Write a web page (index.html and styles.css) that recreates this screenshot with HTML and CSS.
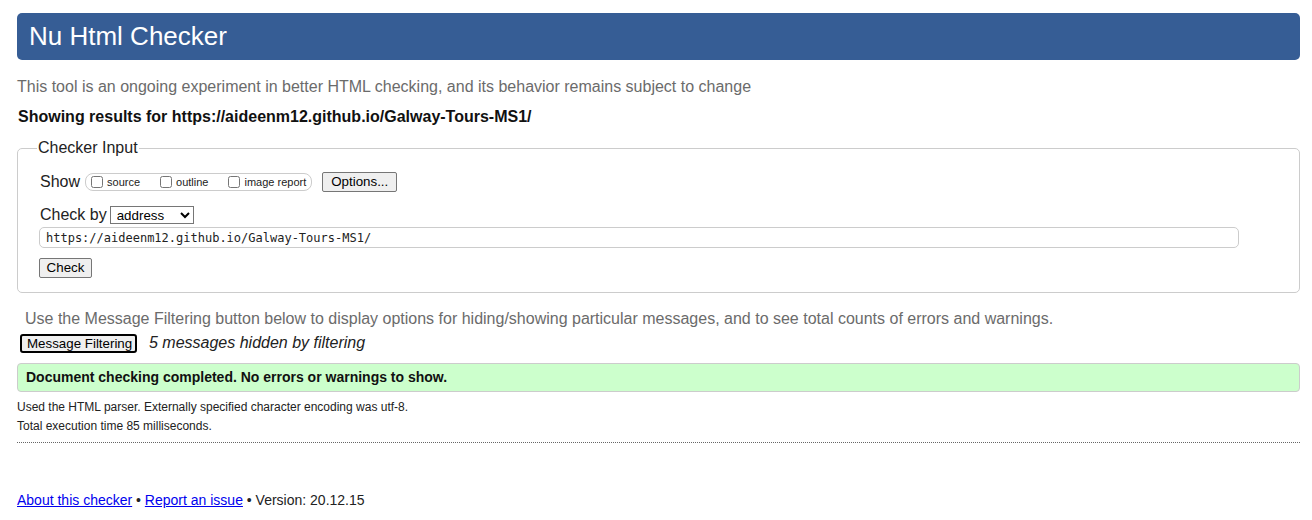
FILE: index.html
```html
<!DOCTYPE html>
<html lang="en">
<head>
<meta charset="utf-8">
<title>Nu Html Checker</title>
<link rel="stylesheet" href="styles.css">
</head>
<body>
<h1 class="title">Nu Html Checker</h1>
<p class="intro">This tool is an ongoing experiment in better HTML checking, and its behavior remains subject to change</p>
<p class="showing">Showing results for https://aideenm12.github.io/Galway-Tours-MS1/</p>
<fieldset class="checker">
  <legend class="legend">Checker Input</legend>
  <div class="row show-row">
    <span class="label">Show</span>
    <span class="showbox">
      <label class="opt"><input type="checkbox" class="cb">source</label>
      <label class="opt"><input type="checkbox" class="cb">outline</label>
      <label class="opt"><input type="checkbox" class="cb">image report</label>
    </span>
    <button class="btn options">Options...</button>
  </div>
  <div class="row by-row">
    <span class="label">Check by</span>
    <select class="sel"><option>address</option></select>
  </div>
  <input class="url" type="text" value="https://aideenm12.github.io/Galway-Tours-MS1/">
  <div class="row submit-row">
    <button class="btn check">Check</button>
  </div>
</fieldset>
<p class="filter-note">Use the Message Filtering button below to display options for hiding/showing particular messages, and to see total counts of errors and warnings.</p>
<div class="filter-row">
  <button class="btn filter">Message Filtering</button>
  <em class="hidden-count">5 messages hidden by filtering</em>
</div>
<div class="success">Document checking completed. No errors or warnings to show.</div>
<div class="details">
  <p class="detail">Used the HTML parser. Externally specified character encoding was utf-8.</p>
  <p class="detail">Total execution time 85 milliseconds.</p>
</div>
<hr class="sep">
<p class="footer"><a href="#">About this checker</a> • <a href="#">Report an issue</a> • Version: 20.12.15</p>
</body>
</html>
```

FILE: styles.css
```css
html, body {
  background: #fff;
}
body {
  margin: 0;
  padding: 13px 12px 0 17px;
  font-family: "Liberation Sans", Arial, sans-serif;
  color: #222;
  font-size: 16px;
}
.title {
  margin: 0;
  height: 47px;
  line-height: 47px;
  padding: 0 12px;
  background: #365d95;
  color: #fff;
  font-size: 26px;
  font-weight: normal;
  border-radius: 5px;
}
.intro {
  margin: 18px 0 0 0;
  line-height: 18px;
  color: #6b6b6b;
}
.showing {
  margin: 12px 0 0 1px;
  line-height: 18px;
  font-weight: bold;
  color: #111;
}
.checker {
  margin: 13px 0 0 0;
  padding: 0 0 14px 22px;
  border: 1px solid #cccccc;
  border-radius: 5px;
  min-width: 0;
}
.legend {
  padding: 0 1px;
  margin-left: -3px;
  font-size: 16px;
  line-height: 18px;
  color: #222;
}
.row {
  display: flex;
  align-items: center;
}
.show-row {
  margin-top: 15px;
  height: 20px;
}
.label {
  font-size: 16px;
  line-height: 18px;
  color: #222;
}
.showbox {
  display: inline-flex;
  align-items: center;
  box-sizing: border-box;
  height: 18px;
  margin-left: 5px;
  padding: 0 5px 0 5px;
  border: 1px solid #cccccc;
  border-radius: 8px;
  gap: 20px;
}
.opt {
  display: inline-flex;
  align-items: center;
  font-size: 11px;
  color: #222;
}
.cb {
  width: 12px;
  height: 12px;
  margin: 0 4px 0 0;
}
.btn {
  box-sizing: border-box;
  font-family: "Liberation Sans", Arial, sans-serif;
  font-size: 13.33px;
  background: #efefef;
  border: 1px solid #767676;
  border-radius: 2px;
  color: #000;
  padding: 0 6px;
  height: 20px;
  line-height: 18px;
  white-space: nowrap;
}
.options {
  margin-left: 10px;
  width: 75px;
}
.by-row {
  margin-top: 13px;
  height: 20px;
}
.sel {
  margin-left: 3px;
  width: 84px;
  height: 18px;
  font-family: "Liberation Sans", Arial, sans-serif;
  font-size: 13.33px;
  border: 1px solid #767676;
  border-radius: 0;
  background: #fff;
  color: #000;
  padding: 0 0 0 2px;
}
.url {
  display: block;
  box-sizing: border-box;
  margin: 2px 0 0 -1px;
  width: 1200px;
  height: 21px;
  border: 1px solid #cccccc;
  border-radius: 5px;
  padding: 0 6px;
  font-family: "DejaVu Sans Mono", "Liberation Mono", monospace;
  font-size: 12px;
  color: #222;
  background: #fff;
}
.submit-row {
  margin-top: 10px;
  margin-left: -1px;
}
.check {
  width: 53px;
}
.filter-note {
  margin: 17px 0 0 8px;
  line-height: 18px;
  color: #6b6b6b;
}
.filter-row {
  display: flex;
  align-items: center;
  margin-top: 5px;
  margin-left: 3px;
  height: 20px;
}
.filter {
  height: 19px;
  line-height: 15px;
  border: 2px solid #000;
  border-radius: 3px;
  padding: 0 5px;
  width: 117px;
}
.hidden-count {
  margin-left: 12px;
  font-size: 16px;
  line-height: 18px;
  color: #222;
}
.success {
  margin-top: 10px;
  height: 29px;
  box-sizing: border-box;
  line-height: 27px;
  padding: 0 8px;
  background: #ccffcc;
  border: 1px solid #cccccc;
  border-radius: 4px;
  font-weight: bold;
  font-size: 14px;
  color: #111;
}
.details {
  margin-top: 6px;
}
.detail {
  margin: 0;
  font-size: 12px;
  line-height: 19px;
  color: #222;
}
.sep {
  margin: 6px 0 0 0;
  height: 0;
  border: 0;
  border-top: 1px dotted #666;
}
.footer {
  margin: 49px 0 0 0;
  font-size: 14px;
  line-height: 17px;
  color: #222;
}
.footer a {
  color: #0000ee;
}
```
